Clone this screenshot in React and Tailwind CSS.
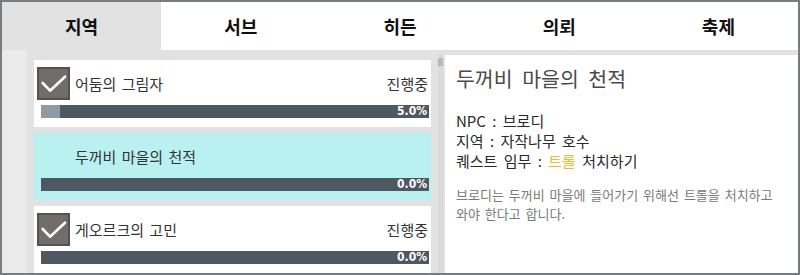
import React from "react";

const tabs = ["지역", "서브", "히든", "의뢰", "축제"];

const quests = [
  { title: "어둠의 그림자", status: "진행중", pct: 5, checked: true },
  { title: "두꺼비 마을의 천적", status: "", pct: 0, checked: false, active: true },
  { title: "게오르크의 고민", status: "진행중", pct: 0, checked: true },
];

const CheckBox = () => (
  <div className="w-[33px] h-[33px] bg-[#716d6c] border-2 border-[#545151] flex items-center justify-center">
    <svg width="29" height="29" viewBox="0 0 29 29">
      <path d="M3.7 14 L11 21.7 L26 7.7" fill="none" stroke="white" strokeWidth="2.6" strokeLinecap="round" strokeLinejoin="round" />
    </svg>
  </div>
);

const QuestItem = ({ q }) => {
  return (
    <div className={`h-[67px] pt-[7px] flex flex-col ${q.active ? "bg-[#b9f1f0]" : "bg-white"}`}>
      <div className="h-[33px] flex items-center pl-[3px] pr-[3px]">
        {q.checked ? <CheckBox /> : <div className="w-[33px] h-[33px]" />}
        <span className="ml-[5px] text-[15px] leading-[20px] text-[#333] [word-spacing:2px]">{q.title}</span>
        <span className="ml-auto text-[15px] leading-[20px] text-[#333]">{q.status}</span>
      </div>
      <div className="relative mt-[5px] ml-[7px] mr-[2px] h-[13px] bg-[#4d5861]">
        <div className="h-full bg-[#8d9ba5]" style={{ width: `${q.pct}%` }} />
        <span className="absolute right-[2px] top-0 text-[12px] leading-[13px] font-bold text-white font-['DejaVu_Sans_Condensed',sans-serif]">
          {q.pct.toFixed(1)}%
        </span>
      </div>
    </div>
  );
};

export default function App() {
  return (
    <div className="w-[800px] h-[275px] border-2 border-[#767c80] bg-[#e2e2e2] flex flex-col overflow-hidden font-['Noto_Sans_CJK_KR',sans-serif]">
      <div className="h-[48px] flex bg-white shrink-0">
        {tabs.map((t, i) => (
          <div
            key={t}
            className={`flex-1 flex items-center justify-center text-[18px] font-bold text-[#111] ${i === 0 ? "bg-[#e2e2e2]" : "bg-white"}`}
          >
            {t}
          </div>
        ))}
      </div>

      <div className="flex-1 flex min-h-0">
        <div className="w-[25px] bg-[#ebebeb]" />
        <div className="w-[411px] px-[7px] pt-[10px] flex flex-col gap-[6px]">
          {quests.map((q) => (
            <QuestItem key={q.title} q={q} />
          ))}
        </div>
        <div className="w-[5px] mt-[5px] bg-[#dadada]">
          <div className="h-[8px] mt-[3px] bg-[#b8b8b8]" />
        </div>
        <div className="flex-1 mt-[5px] ml-[2px] bg-white pl-[11px] pr-[8px] pt-[10px]">
          <div className="text-[20.5px] leading-[26px] text-[#4a4a4a] [word-spacing:5px]">두꺼비 마을의 천적</div>
          <div className="mt-[20px] text-[15px] leading-[20px] text-[#2a2a2a] [word-spacing:3px]">
            <div>NPC : 브로디</div>
            <div>지역 : 자작나무 호수</div>
            <div>
              퀘스트 임무 : <span className="text-[#f6b62c]">트롤</span> 처치하기
            </div>
          </div>
          <div className="mt-[14px] text-[13px] leading-[19px] text-[#7a7a7a] [word-spacing:2px] whitespace-nowrap">
            브로디는 두꺼비 마을에 들어가기 위해선 트롤을 처치하고
            <br />
            와야 한다고 합니다.
          </div>
        </div>
      </div>
    </div>
  );
}
